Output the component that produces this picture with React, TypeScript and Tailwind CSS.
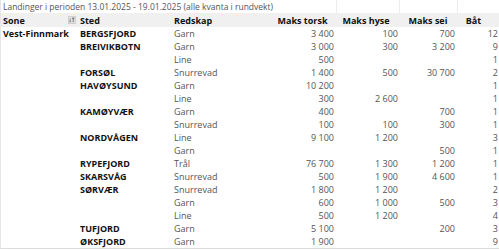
import React from 'react';

type Row = {
  sone?: string;
  sted?: string;
  redskap: string;
  torsk?: string;
  hyse?: string;
  sei?: string;
  bat: string;
};

const rows: Row[] = [
  { sone: 'Vest-Finnmark', sted: 'BERGSFJORD', redskap: 'Garn', torsk: '3 400', hyse: '100', sei: '700', bat: '12' },
  { sted: 'BREIVIKBOTN', redskap: 'Garn', torsk: '3 000', hyse: '300', sei: '3 200', bat: '9' },
  { redskap: 'Line', torsk: '500', bat: '1' },
  { sted: 'FORSØL', redskap: 'Snurrevad', torsk: '1 400', hyse: '500', sei: '30 700', bat: '2' },
  { sted: 'HAVØYSUND', redskap: 'Garn', torsk: '10 200', bat: '1' },
  { redskap: 'Line', torsk: '300', hyse: '2 600', bat: '1' },
  { sted: 'KAMØYVÆR', redskap: 'Garn', torsk: '400', sei: '700', bat: '1' },
  { redskap: 'Snurrevad', torsk: '100', hyse: '100', sei: '300', bat: '1' },
  { sted: 'NORDVÅGEN', redskap: 'Line', torsk: '9 100', hyse: '1 200', bat: '3' },
  { redskap: 'Garn', sei: '500', bat: '1' },
  { sted: 'RYPEFJORD', redskap: 'Trål', torsk: '76 700', hyse: '1 300', sei: '1 200', bat: '1' },
  { sted: 'SKARSVÅG', redskap: 'Snurrevad', torsk: '500', hyse: '1 900', sei: '4 600', bat: '1' },
  { sted: 'SØRVÆR', redskap: 'Snurrevad', torsk: '1 800', hyse: '1 200', bat: '2' },
  { redskap: 'Garn', torsk: '600', hyse: '1 000', sei: '500', bat: '3' },
  { redskap: 'Line', torsk: '500', hyse: '1 200', bat: '4' },
  { sted: 'TUFJORD', redskap: 'Garn', torsk: '5 100', sei: '200', bat: '3' },
  { sted: 'ØKSFJORD', redskap: 'Garn', torsk: '1 900', bat: '9' },
];

const cols = 'grid grid-cols-[76px_94px_104px_61px_63px_58px_42px]';

const FilterIcon = () => (
  <svg width="8" height="8" viewBox="0 0 8 8" className="shrink-0">
    <rect x="0.5" y="0.5" width="7" height="7" fill="#e6e6e6" stroke="#cfcfcf" />
    <path d="M2.2 2.5v3.6M1.6 5.4l.6.7.6-.7" stroke="#666" strokeWidth="0.7" fill="none" />
    <path d="M3.9 2.2h2.6M5.2 2.2v4" stroke="#555" strokeWidth="0.8" fill="none" />
  </svg>
);

export default function App() {
  return (
    <div
      className="w-[499px] h-[250px] overflow-hidden bg-white text-[9px] leading-[13px] text-[#222] whitespace-nowrap"
      style={{ fontFamily: '"Open Sans", sans-serif' }}
    >
      <div className="w-[499px] border-l border-[#e6e6e6]">
        {/* title row */}
        <div className={`${cols} h-[13px]`}>
          <div className="col-span-4 pl-[2px] text-[8.5px] text-[#555]">
            Landinger i perioden 13.01.2025 - 19.01.2025 (alle kvanta i rundvekt)
          </div>
          <div className="border-l border-[#ececec]" />
          <div className="border-l border-[#ececec]" />
          <div className="border-l border-[#ececec]" />
        </div>

        {/* header */}
        <div className={`${cols} h-[14px] items-center bg-[#f0f0f0] font-bold text-[#111]`}>
          <div className="pl-[2px] pr-[1px] flex items-center justify-between">
            <span>Sone</span>
            <FilterIcon />
          </div>
          <div className="pl-[3px]">Sted</div>
          <div className="pl-[3px]">Redskap</div>
          <div className="text-center pr-[6px]">Maks torsk</div>
          <div className="text-center pr-[3px]">Maks hyse</div>
          <div className="text-center">Maks sei</div>
          <div className="text-center pr-[9px]">Båt</div>
        </div>

        {/* body */}
        <div className="border-b border-[#dcdcdc]">
          {rows.map((r, i) => (
            <div key={i} className={`${cols} h-[13px] items-center`}>
              <div className="pl-[2px] font-bold text-[#111]">{r.sone}</div>
              <div className="pl-[3px] font-bold text-[#111]">{r.sted}</div>
              <div className="pl-[3px] text-[#555]">{r.redskap}</div>
              <div className="text-right pr-[2px] text-[#555]">{r.torsk}</div>
              <div className="text-right pr-[1px] text-[#555]">{r.hyse}</div>
              <div className="text-right pr-[2px] text-[#555]">{r.sei}</div>
              <div className="text-right pr-[1px] text-[#555]">{r.bat}</div>
            </div>
          ))}
        </div>
      </div>
    </div>
  );
}
